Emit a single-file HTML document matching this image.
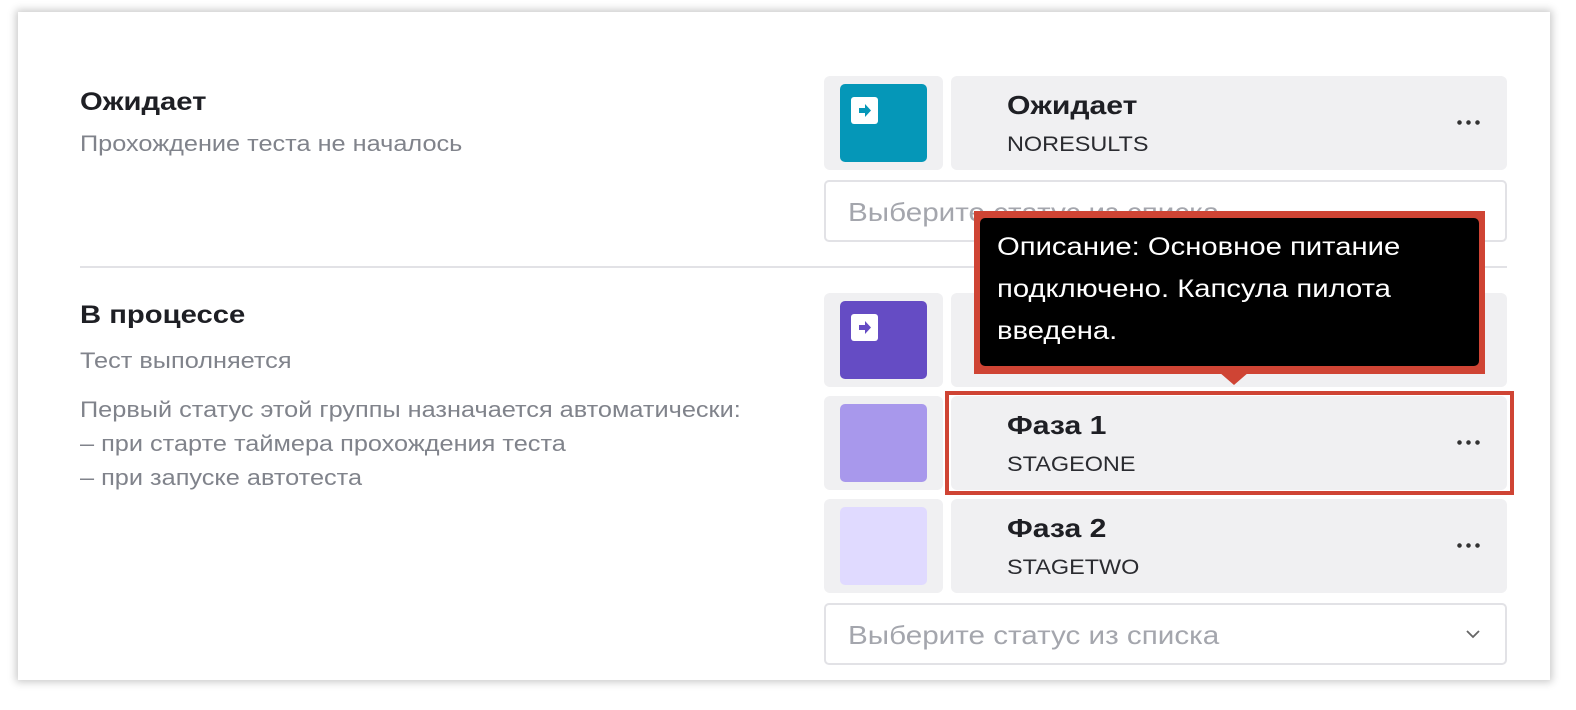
<!DOCTYPE html>
<html><head><meta charset="utf-8"><style>
*{box-sizing:border-box;margin:0;padding:0}
html,body{width:1576px;height:710px;overflow:hidden}
body{background:#fff;font-family:"Liberation Sans",sans-serif;position:relative}
.card{position:absolute;left:18px;top:12px;width:1532px;height:668px;background:#fff;box-shadow:0 0 8px 2px rgba(0,0,0,.22)}
.a{position:absolute;white-space:nowrap;transform-origin:0 0}
.h{font-size:25px;font-weight:bold;color:#1e1f24;transform:scaleX(1.17)}
.d{font-size:22px;color:#80838b;line-height:34px;transform:scaleX(1.15)}
.sw{position:absolute;left:824px;width:119px;height:94px;background:#f0f0f2;border-radius:6px}
.sw i{position:absolute;left:16px;top:8px;width:87px;height:78px;border-radius:5px}
.sw b{position:absolute;left:11px;top:13px;width:27px;height:27px;background:#fff;border-radius:3px}
.tile{position:absolute;left:951px;width:556px;height:94px;background:#f0f0f2;border-radius:6px}
.tile .t{position:absolute;left:56px;top:14px;font-size:26px;font-weight:bold;color:#1e1f24;transform:scaleX(1.16);transform-origin:0 0}
.tile .c{position:absolute;left:56px;top:56px;font-size:21.5px;color:#2a2b30;transform:scaleX(1.09);transform-origin:0 0}
.tile .m{position:absolute;right:26px;top:44px;width:26px;height:5px;background:radial-gradient(circle,#333 2px,transparent 2.5px) 0 0/9px 5px repeat-x}
.sel{position:absolute;left:824px;width:683px;height:62px;border:2px solid #e2e2e6;border-radius:5px;background:#fff}
.sel span{position:absolute;left:22px;top:15px;font-size:26px;color:#a4a6ad;white-space:nowrap;transform:scaleX(1.14);transform-origin:0 0}
.sel svg{position:absolute;right:24px;top:24px}
</style></head><body>
<div class="card"></div>
<div class="a h" style="left:80px;top:88px">Ожидает</div>
<div class="a d" style="left:80px;top:127px">Прохождение теста не началось</div>
<div class="a h" style="left:80px;top:301px">В процессе</div>
<div class="a d" style="left:80px;top:344px">Тест выполняется</div>
<div class="a d" style="left:80px;top:393px">Первый статус этой группы назначается автоматически:<br>– при старте таймера прохождения теста<br>– при запуске автотеста</div>
<div class="a" style="left:80px;top:266px;width:1427px;height:2px;background:#e2e2e6"></div>

<div class="sw" style="top:76px"><i style="background:#0597b8"><b><svg width="27" height="27" viewBox="0 0 27 27"><path d="M8 11h6V7l6 6.5-6 6.5v-4H8z" fill="#0597b8"/></svg></b></i></div>
<div class="tile" style="top:76px"><div class="t">Ожидает</div><div class="c">NORESULTS</div><div class="m"></div></div>
<div class="sel" style="top:180px"><span>Выберите статус из списка</span></div>

<div class="sw" style="top:293px"><i style="background:#654cc4"><b><svg width="27" height="27" viewBox="0 0 27 27"><path d="M8 11h6V7l6 6.5-6 6.5v-4H8z" fill="#654cc4"/></svg></b></i></div>
<div class="tile" style="top:293px"></div>

<div class="sw" style="top:396px"><i style="background:#a898ec"></i></div>
<div class="tile" style="top:396px"><div class="t">Фаза 1</div><div class="c">STAGEONE</div><div class="m"></div></div>
<div class="a" style="left:945px;top:391px;width:569px;height:104px;border:4px solid #cf4434"></div>

<div class="sw" style="top:499px"><i style="background:#e0daff"></i></div>
<div class="tile" style="top:499px"><div class="t">Фаза 2</div><div class="c">STAGETWO</div><div class="m"></div></div>
<div class="sel" style="top:603px"><span>Выберите статус из списка</span><svg width="16" height="10" viewBox="0 0 16 10"><path d="M2 2l6 6 6-6" fill="none" stroke="#666" stroke-width="1.8"/></svg></div>

<div class="a" style="left:974px;top:211px;width:511px;height:163px;background:#cf4434"></div>
<div class="a" style="left:980px;top:218px;width:499px;height:148px;background:#000;border-radius:5px"></div>
<div class="a" style="left:997px;top:226px;color:#fff;font-size:25px;line-height:42px;transform:scaleX(1.17)">Описание: Основное питание<br>подключено. Капсула пилота<br>введена.</div>
<svg class="a" style="left:1219px;top:372px" width="30" height="14" viewBox="0 0 30 14"><path d="M0 0h30L15 13z" fill="#cf4434"/></svg>
</body></html>
